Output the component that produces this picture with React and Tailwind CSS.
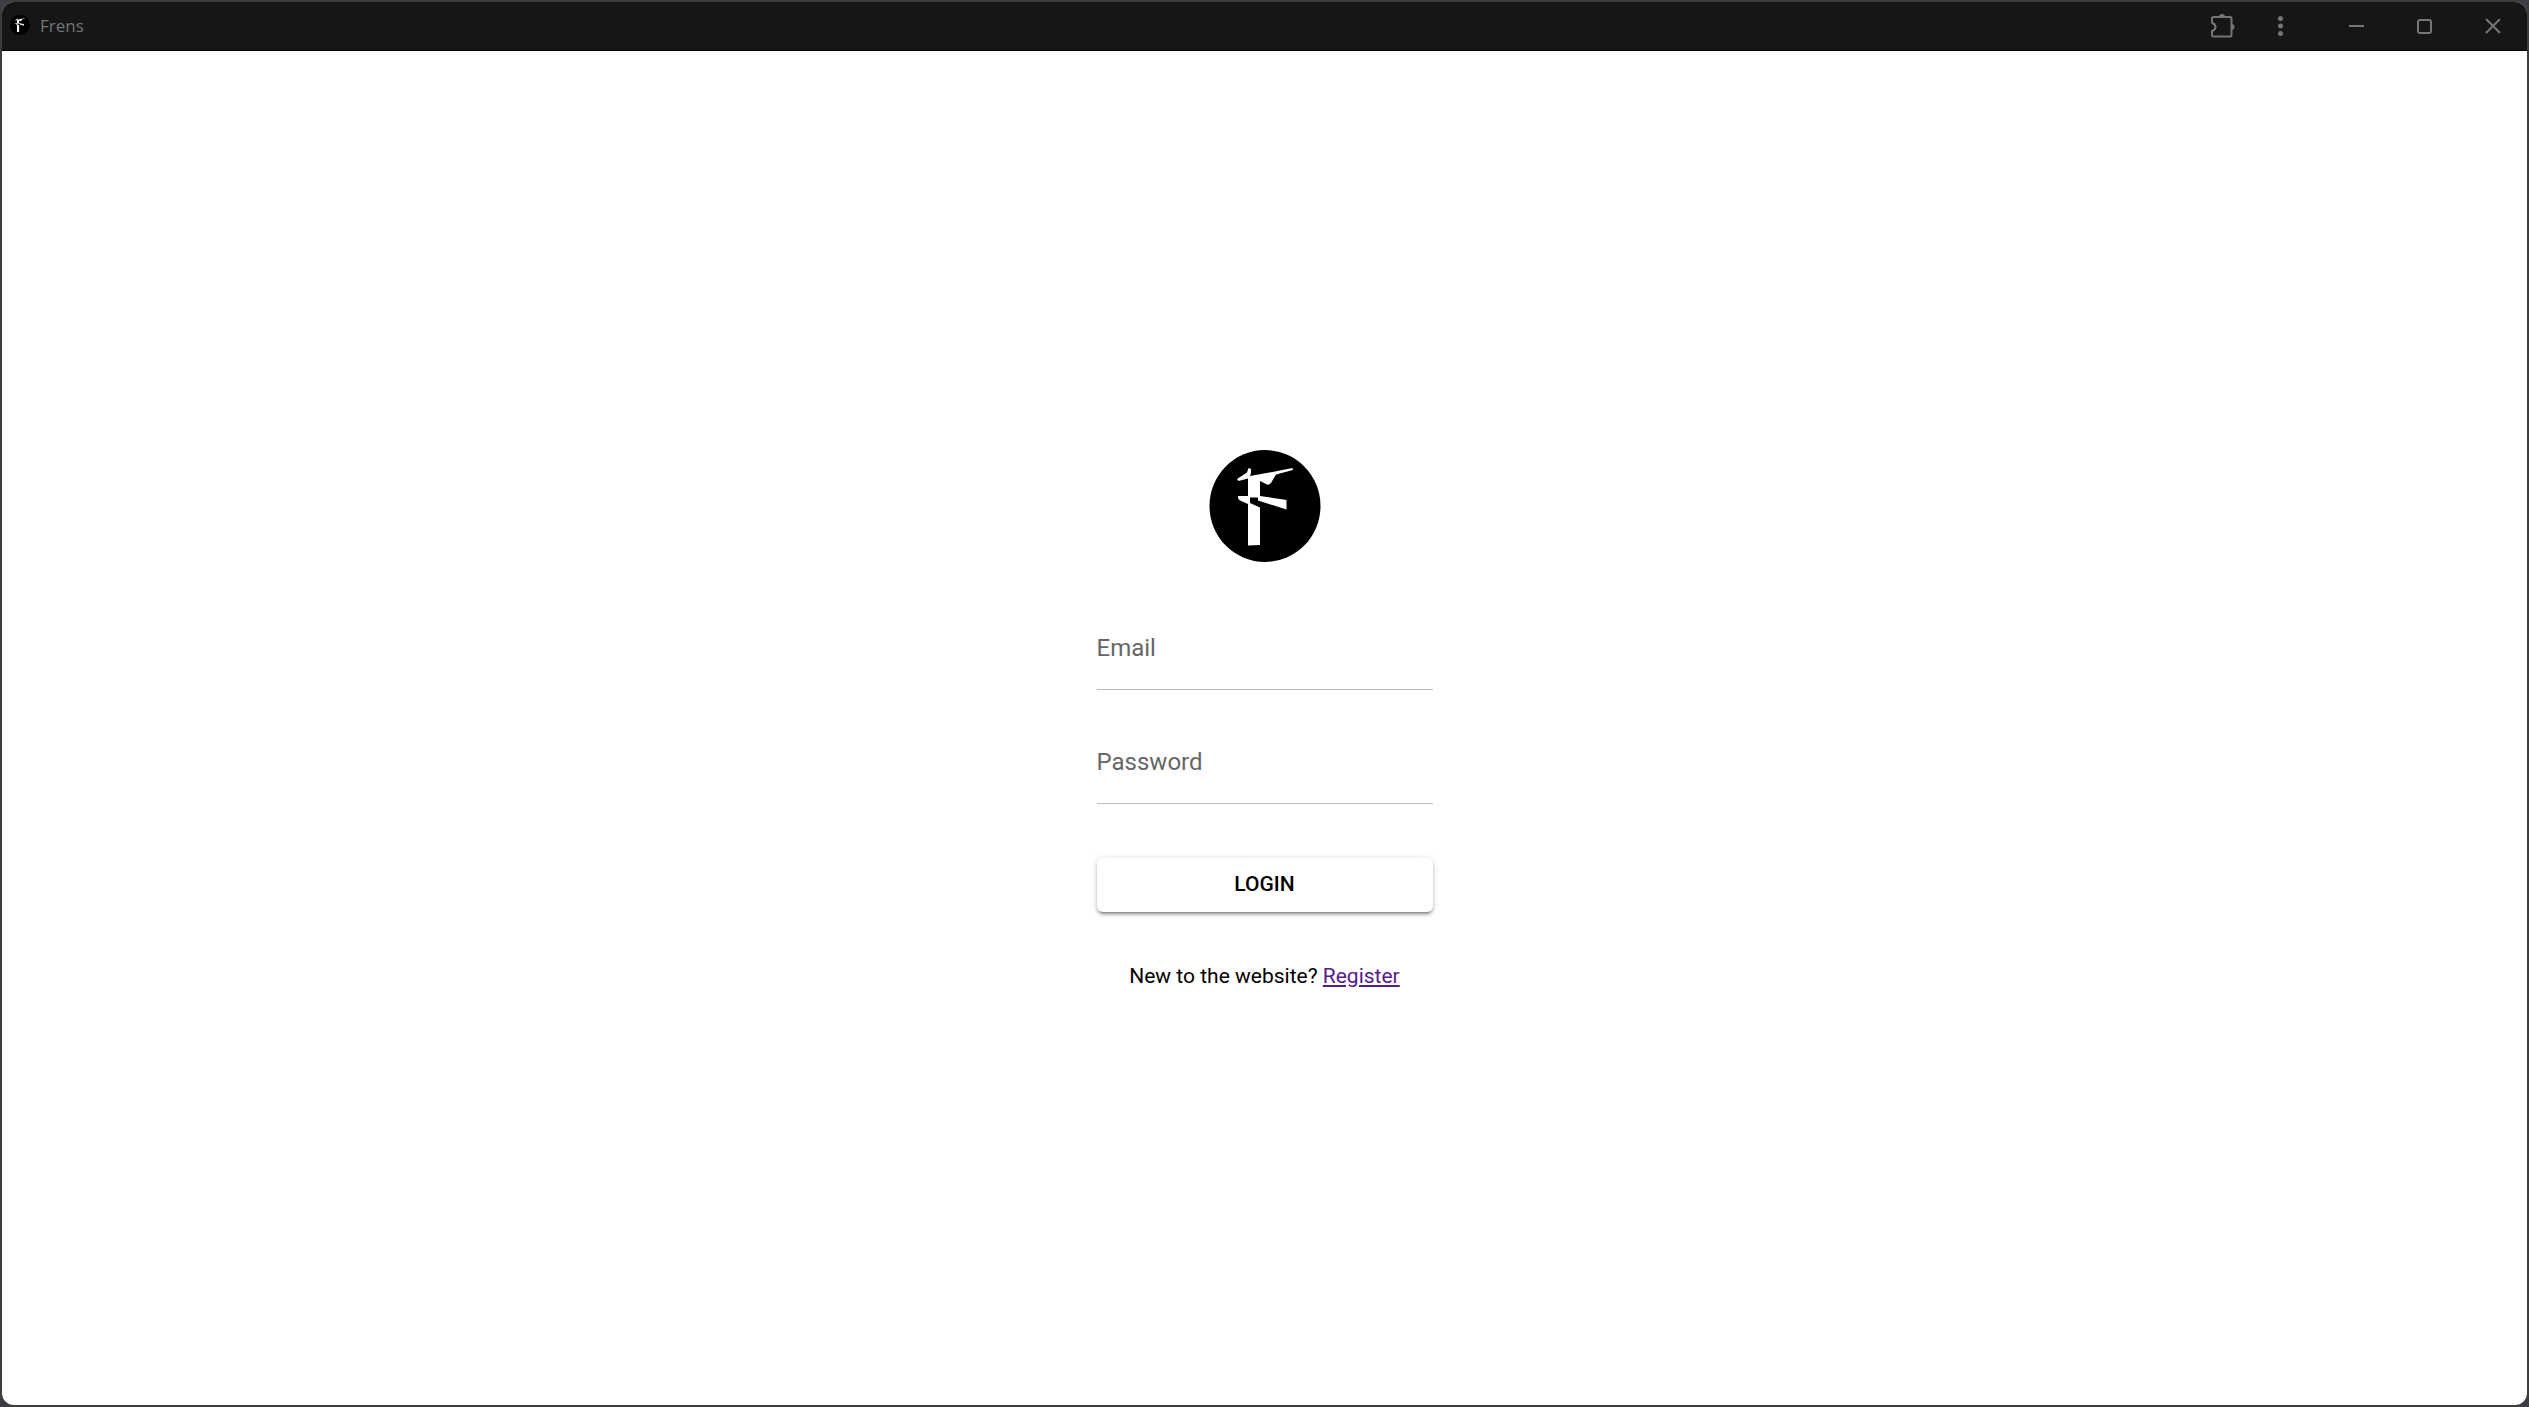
import React from "react";

function Mark({ className }) {
  return (
    <svg viewBox="0 0 111 112" className={className} aria-hidden="true">
      <ellipse cx="55.5" cy="56" rx="55.5" ry="56" fill="#000" />
      <g fill="#fff">
        <path d="M27.5 29 L37.5 22.5 L39 18 L41.5 19 V23 L40.5 26 L65.5 21.5 L83 18 L83.5 20 L66.5 24.5 L61.5 33 Q59 36 56.5 34 L50.5 31 V46 L77 50 V59.5 L48.5 50.5 V47.5 L40.5 47.5 V53 L50.5 57.5 V95 L38.5 95.5 V54 L30.5 50.5 Q28 49 28.5 46 L38.5 46 V28.5 L29 31 Z" />
      </g>
    </svg>
  );
}

function TitleBar() {
  return (
    <header className="flex h-[49px] shrink-0 items-center justify-between border-b border-black bg-[#161616] pl-2 text-[#757575]">
      <div className="flex items-center gap-[10px]">
        <Mark className="mb-0.5 h-5 w-5" />
        <span className="font-['Open_Sans',sans-serif] text-[17px] leading-6">Frens</span>
      </div>
      <div className="flex items-center">
        <button type="button" aria-label="Extensions" className="mr-8 grid h-7 w-7 place-items-center">
          <svg viewBox="0 0 28 28" className="h-7 w-7" fill="none" stroke="currentColor" strokeWidth="2">
            <path d="M5 6.5 Q5 5 6.5 5 H23 Q24.500 5 24.500 6.500 V23 Q24.500 24.500 23 24.500 H6.500 Q5 24.500 5 23 V19 Q8.500 18 8.500 15 Q8.500 12 5 11 Z" strokeLinejoin="round" />
            <path d="M12 5 A3 3 0 0 1 18 5 Z M24.500 12 A3 3 0 0 1 24.500 18 Z" fill="currentColor" stroke="none" />
          </svg>
        </button>
        <button type="button" aria-label="Menu" className="mr-12 grid h-7 w-7 place-items-center">
          <svg viewBox="0 0 28 28" className="h-7 w-7" fill="currentColor">
            <circle cx="13.500" cy="6.500" r="2.500" />
            <circle cx="13.500" cy="14" r="2.500" />
            <circle cx="13.500" cy="21.500" r="2.500" />
          </svg>
        </button>
        <button type="button" aria-label="Minimize" className="mr-10 grid h-7 w-7 place-items-center">
          <svg viewBox="0 0 28 28" className="h-7 w-7" stroke="currentColor" strokeWidth="2">
            <path d="M6 14 H21" />
          </svg>
        </button>
        <button type="button" aria-label="Maximize" className="mr-10 grid h-7 w-7 place-items-center">
          <svg viewBox="0 0 28 28" className="h-7 w-7" fill="none" stroke="currentColor" strokeWidth="2">
            <rect x="7" y="8" width="13" height="13" rx="2" />
          </svg>
        </button>
        <button type="button" aria-label="Close" className="mr-5 grid h-7 w-7 place-items-center">
          <svg viewBox="0 0 28 28" className="h-7 w-7" stroke="currentColor" strokeWidth="2">
            <path d="M7 7 L21 21 M21 7 L7 21" />
          </svg>
        </button>
      </div>
    </header>
  );
}

function Field({ id, label, type }) {
  return (
    <div className="relative w-full">
      <input
        id={id}
        type={type}
        placeholder=" "
        className="peer block h-[72px] w-full border-b border-[#bdbdbd] bg-transparent pt-6 text-[24px] text-black outline-none focus:border-black"
      />
      <label
        htmlFor={id}
        className="pointer-events-none absolute left-0 top-[14px] text-[24px] leading-8 text-[#666666] peer-focus:top-0 peer-focus:text-[18px] peer-[:not(:placeholder-shown)]:top-0 peer-[:not(:placeholder-shown)]:text-[18px]"
      >
        {label}
      </label>
    </div>
  );
}

export default function App() {
  return (
    <div className="flex min-h-screen bg-[#3c3d40] p-0.5 font-[Roboto,sans-serif]">
      <div className="flex grow flex-col overflow-hidden rounded-xl bg-white">
        <TitleBar />
        <main className="flex grow flex-col items-center justify-center">
          <form className="flex w-[336px] flex-col items-center pb-[14px]" onSubmit={(e) => e.preventDefault()}>
            <Mark className="mb-14 h-28 w-28" />
            <div className="flex w-full flex-col gap-[42px]">
              <Field id="email" label="Email" type="email" />
              <Field id="password" label="Password" type="password" />
            </div>
            <button
              type="submit"
              className="mt-[54px] h-[54px] w-full rounded-md bg-white text-[21px] font-medium text-black shadow-[0_4px_2px_-3px_rgba(0,0,0,0.3),0_3px_3px_0_rgba(0,0,0,0.2),0_1px_7px_0_rgba(0,0,0,0.16)]"
            >
              LOGIN
            </button>
            <p className="mt-12 text-[21px] leading-8 text-black">
              New to the website?{" "}
              <a href="#register" className="text-[#551a8b] underline">
                Register
              </a>
            </p>
          </form>
        </main>
      </div>
    </div>
  );
}
